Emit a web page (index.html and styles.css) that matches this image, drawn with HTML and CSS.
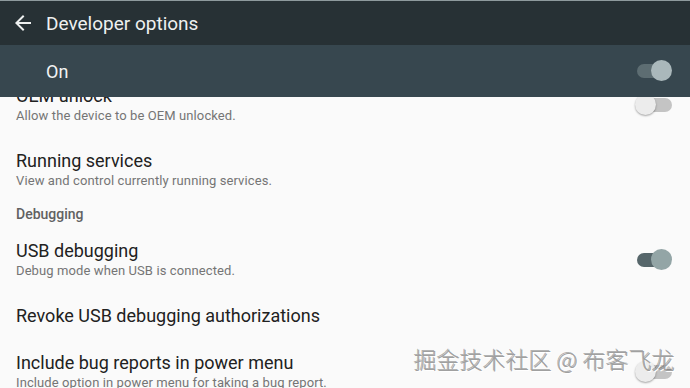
FILE: index.html
```html
<!DOCTYPE html>
<html lang="en">
<head>
    <meta charset="UTF-8">
    <meta name="viewport" content="width=device-width, initial-scale=1.0">
    <title>Developer options</title>
    <link rel="stylesheet" href="styles.css">
</head>
<body>
    <div class="screen">
        <header class="appbar">
            <div class="toolbar">
                <svg class="back" viewBox="0 0 24 24" width="24" height="24">
                    <path d="M20 11H7.83l5.59-5.59L12 4l-8 8 8 8 1.41-1.41L7.83 13H20v-2z" fill="#eef0f0"/>
                </svg>
                <h1 class="toolbar-title">Developer options</h1>
            </div>
            <div class="master">
                <span class="master-label">On</span>
                <span class="switch on dark"><span class="track"></span><span class="thumb"></span></span>
            </div>
        </header>

        <div class="list">
            <div class="list-inner">
                <div class="pref">
                    <div class="pref-text">
                        <div class="pref-title">OEM unlock</div>
                        <div class="pref-summary">Allow the device to be OEM unlocked.</div>
                    </div>
                    <span class="switch off"><span class="track"></span><span class="thumb"></span></span>
                </div>
                <div class="pref">
                    <div class="pref-text">
                        <div class="pref-title">Running services</div>
                        <div class="pref-summary">View and control currently running services.</div>
                    </div>
                </div>
                <div class="category">Debugging</div>
                <div class="pref">
                    <div class="pref-text">
                        <div class="pref-title">USB debugging</div>
                        <div class="pref-summary">Debug mode when USB is connected.</div>
                    </div>
                    <span class="switch on"><span class="track"></span><span class="thumb"></span></span>
                </div>
                <div class="pref">
                    <div class="pref-text">
                        <div class="pref-title">Revoke USB debugging authorizations</div>
                    </div>
                </div>
                <div class="pref">
                    <div class="pref-text">
                        <div class="pref-title">Include bug reports in power menu</div>
                        <div class="pref-summary">Include option in power menu for taking a bug report.</div>
                    </div>
                    <span class="switch off"><span class="track"></span><span class="thumb"></span></span>
                </div>
            </div>
        </div>

        <div class="watermark">掘金技术社区 @ 布客飞龙</div>
    </div>
</body>
</html>
```

FILE: styles.css
```css
body {
    margin: 0;
    background-color: #fafafa;
    font-family: Roboto, "Noto Sans", sans-serif;
}

.screen {
    position: relative;
    width: 690px;
    height: 388px;
    overflow: hidden;
    display: flex;
    flex-direction: column;
    background-color: #fafafa;
}

.appbar {
    flex: none;
    position: relative;
    z-index: 1;
}

.toolbar {
    height: 44px;
    display: flex;
    align-items: center;
    background-color: #273135;
    border-top: 1px solid #8e9a9d;
}

.back {
    margin-left: 11px;
    margin-right: 11px;
}

.toolbar-title {
    margin: 0;
    font-size: 19px;
    font-weight: 400;
    color: #eef0f0;
}

.master {
    height: 52px;
    display: flex;
    align-items: center;
    justify-content: space-between;
    padding: 0 18px 0 46px;
    background-color: #37474f;
}

.master-label {
    font-size: 18px;
    color: #f2f4f4;
}

.list {
    flex: 1;
    overflow: hidden;
}

.list-inner {
    margin-top: -25px;
}

.pref {
    display: flex;
    align-items: center;
    padding: 13px 18px 12px 16px;
}

.pref-text {
    flex: 1;
}

.pref-title {
    font-size: 18px;
    line-height: 22px;
    color: #212121;
}

.pref-summary {
    font-size: 13px;
    line-height: 18px;
    letter-spacing: 0.1px;
    color: #757575;
}

.category {
    padding: 2px 16px 3px;
    font-size: 14px;
    line-height: 20px;
    font-weight: 500;
    color: #616161;
}

/* switch */
.switch {
    position: relative;
    width: 37px;
    height: 22px;
    flex: none;
}

.switch .track {
    position: absolute;
    top: 4px;
    width: 34px;
    height: 14px;
    border-radius: 7px;
}

.switch .thumb {
    position: absolute;
    top: 0;
    width: 21px;
    height: 21px;
    border-radius: 50%;
}

.switch.on .track {
    left: 2px;
    background-color: #56666a;
}

.switch.on .thumb {
    right: 0;
    background-color: #93a5a6;
}

.switch.on.dark .track {
    background-color: #5d6d72;
}

.switch.on.dark .thumb {
    background-color: #aab8bb;
}

.switch.off .track {
    left: 3px;
    background-color: #c4c4c4;
}

.switch.off .thumb {
    left: 0;
    background-color: #ececec;
    box-shadow: 0 1px 2px rgba(0, 0, 0, 0.35);
}

.watermark {
    position: absolute;
    right: 15px;
    top: 342px;
    font-family: "Noto Sans CJK SC", sans-serif;
    font-size: 23px;
    font-weight: 300;
    color: #a0a0a0;
    text-shadow: -1px -1px 0 rgba(0, 0, 0, 0.3), 1px 1px 0 #fff;
    z-index: 2;
}
```
